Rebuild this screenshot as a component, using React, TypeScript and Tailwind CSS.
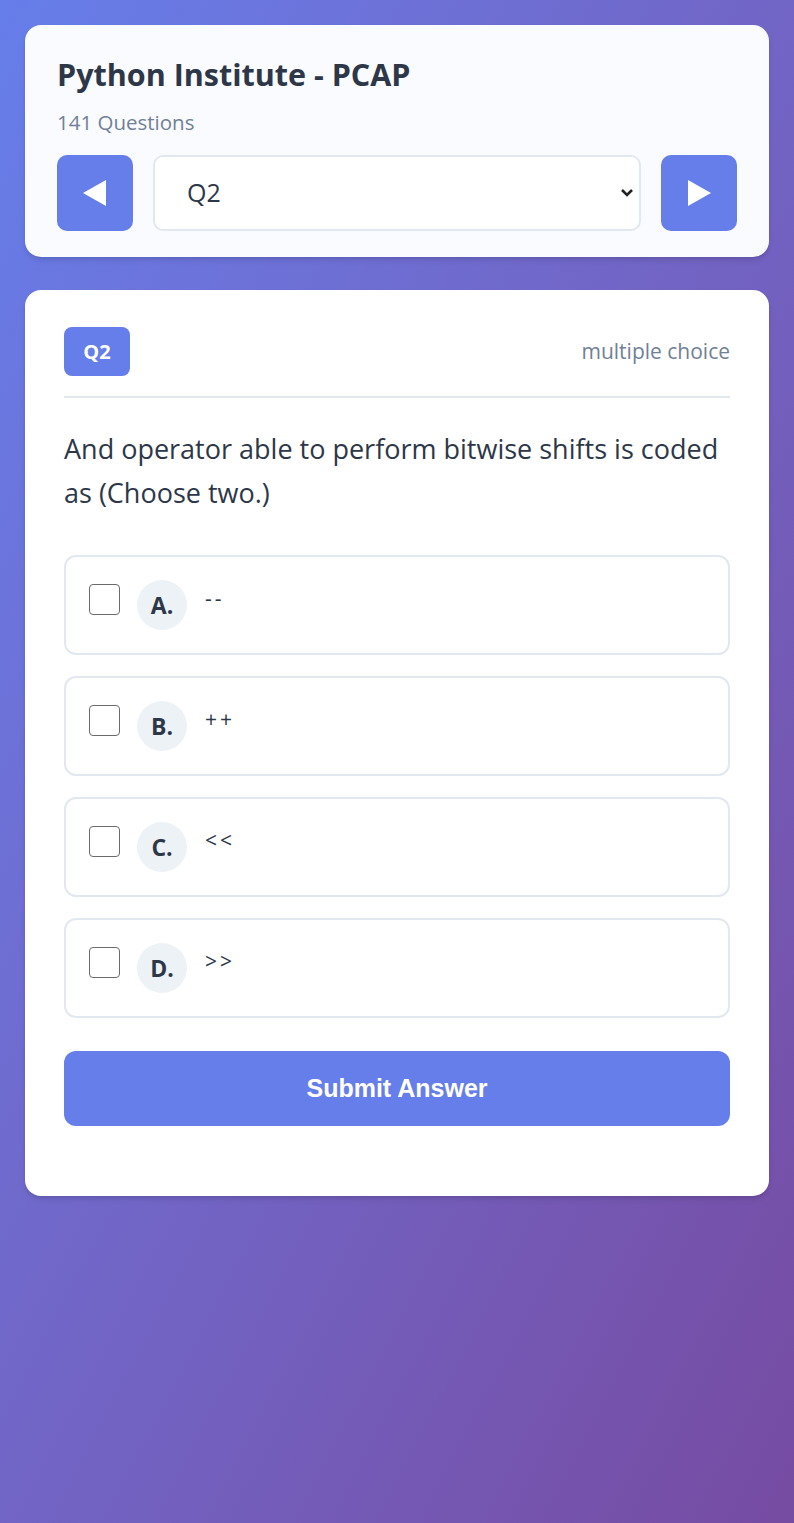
import React from "react";

const options = [
  { letter: "A.", text: "--" },
  { letter: "B.", text: "++" },
  { letter: "C.", text: "<<" },
  { letter: "D.", text: ">>" },
];

function Triangle({ dir }: { dir: "left" | "right" }) {
  return (
    <svg width="24" height="26" viewBox="0 0 24 26" fill="white">
      {dir === "left" ? <polygon points="23,0 23,26 0,13" /> : <polygon points="1,0 1,26 24,13" />}
    </svg>
  );
}

export default function App() {
  const font = { fontFamily: '"Open Sans", "Noto Sans", sans-serif' };
  return (
    <div
      className="min-h-screen w-full bg-gradient-to-br from-[#667eea] to-[#764ba2] px-[25px] pt-[25px] pb-10"
      style={font}
    >
      <div className="rounded-2xl bg-[#fafbff] px-8 pt-[31px] pb-[26px] shadow-md">
        <h1 className="text-[30.5px] font-bold leading-[36px] text-[#2d3748]">Python Institute - PCAP</h1>
        <p className="mt-[17px] text-[20.5px] leading-[26px] text-[#718096]">141 Questions</p>
        <div className="mt-[20px] flex items-center gap-5">
          <button className="flex h-[76px] w-[76px] shrink-0 items-center justify-center rounded-[10px] bg-[#667eea]">
            <Triangle dir="left" />
          </button>
          <div className="relative flex-1">
            <select
              className="h-[76px] w-full appearance-none rounded-[10px] border-2 border-[#e2e8f0] bg-white pl-[32px] text-[25px] text-[#2d3748] outline-none"
              style={font}
              defaultValue="Q2"
            >
              <option>Q1</option>
              <option>Q2</option>
              <option>Q3</option>
            </select>
            <svg
              className="pointer-events-none absolute right-[7px] top-1/2 -translate-y-1/2"
              width="14"
              height="10"
              viewBox="0 0 14 10"
              fill="none"
              stroke="#222"
              strokeWidth="2.6"
            >
              <polyline points="2,2 7,7 12,2" />
            </svg>
          </div>
          <button className="flex h-[76px] w-[76px] shrink-0 items-center justify-center rounded-[10px] bg-[#667eea]">
            <Triangle dir="right" />
          </button>
        </div>
      </div>

      <div className="mt-[33px] rounded-2xl bg-white px-[39px] pt-[37px] pb-[70px] shadow-md">
        <div className="flex items-center justify-between border-b-2 border-[#e2e8f0] pb-5">
          <span className="flex h-[49px] w-[66px] items-center justify-center rounded-[8px] bg-[#667eea] text-[20px] font-bold text-white">
            Q2
          </span>
          <span className="text-[21px] text-[#718096]">multiple choice</span>
        </div>
        <p className="mt-[29px] text-[27px] leading-[44px] text-[#2d3748]">
          And operator able to perform bitwise shifts is coded as (Choose two.)
        </p>
        <div className="mt-[40px] flex flex-col gap-[21px]">
          {options.map((o) => (
            <label
              key={o.letter}
              className="flex h-[100px] items-start rounded-xl border-2 border-[#e2e8f0] bg-white px-[23px] pt-[23px]"
            >
              <span className="mt-[4px] h-[31px] w-[31px] shrink-0 rounded-[4px] border-[1.5px] border-[#6b6b6b] bg-white" />
              <span className="ml-[17px] flex h-[50px] w-[50px] shrink-0 items-center justify-center rounded-full bg-[#edf2f7] text-[23px] font-bold text-[#2d3748]">
                {o.letter}
              </span>
              <span className="ml-[18px] mt-[3px] text-[21px] leading-[30px] tracking-[3px] text-[#2d3748]">{o.text}</span>
            </label>
          ))}
        </div>
        <button
          className="mt-[33px] flex h-[75px] w-full items-center justify-center rounded-xl bg-[#667eea] text-[25px] font-bold text-white"
          style={{ fontFamily: '"Liberation Sans", Arial, sans-serif' }}
        >
          Submit Answer
        </button>
      </div>
    </div>
  );
}
